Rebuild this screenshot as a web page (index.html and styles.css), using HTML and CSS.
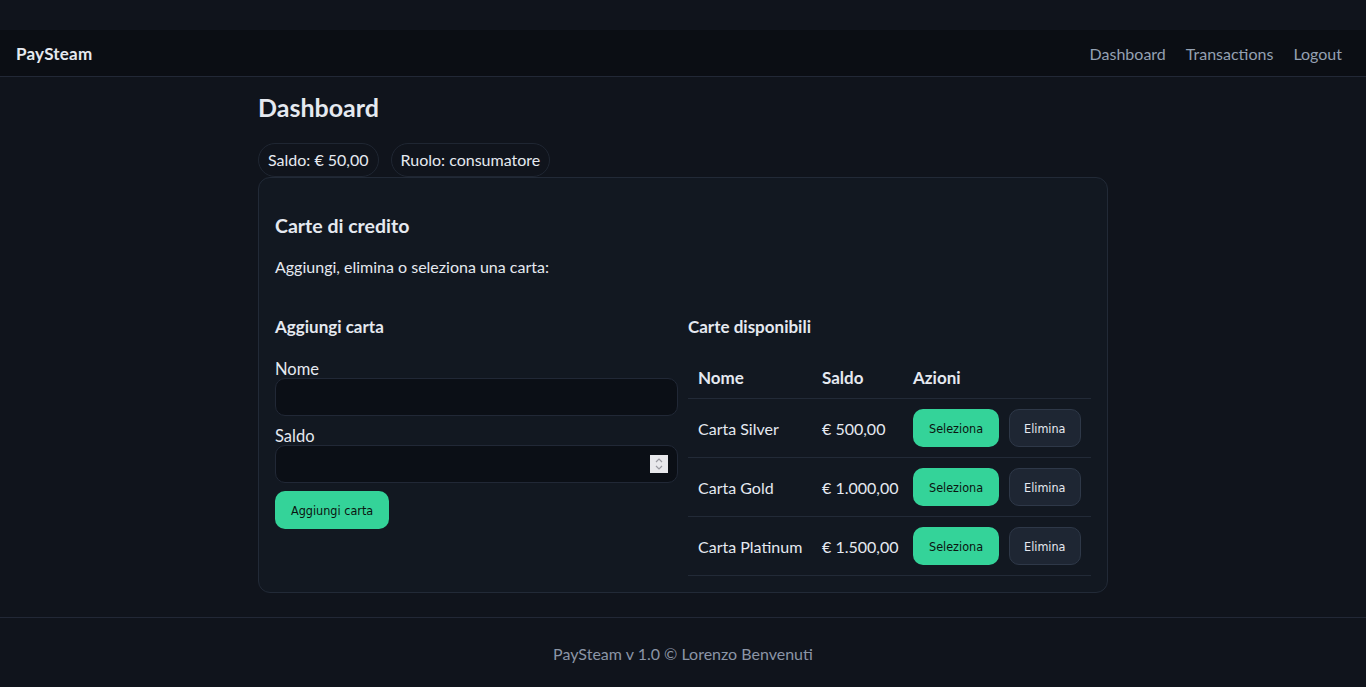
FILE: index.html
```html
<!DOCTYPE html>
<html lang="it">
<head>
    <meta charset="UTF-8">
    <meta name="viewport" content="width=device-width, initial-scale=1.0">
    <title>PaySteam - Dashboard</title>
    <link rel="stylesheet" href="styles.css">
</head>
<body>

    <!-- Top navigation -->
    <header class="topbar">
        <a class="brand" href="#">PaySteam</a>
        <nav class="nav-links">
            <a href="#">Dashboard</a>
            <a href="#">Transactions</a>
            <a href="#">Logout</a>
        </nav>
    </header>

    <main class="container">
        <h1>Dashboard</h1>

        <div class="badges">
            <span class="badge">Saldo: € 50,00</span>
            <span class="badge">Ruolo: consumatore</span>
        </div>

        <section class="card">
            <h2>Carte di credito</h2>
            <p>Aggiungi, elimina o seleziona una carta:</p>

            <div class="columns">
                <!-- Form to add a new card -->
                <div class="col">
                    <h3>Aggiungi carta</h3>
                    <form id="cardForm" class="card-form">
                        <label for="nome">Nome</label>
                        <input type="text" id="nome" name="nome">
                        <label for="saldo">Saldo</label>
                        <div class="number-field">
                            <input type="number" id="saldo" name="saldo" step="0.01">
                            <span class="spinner">
                                <svg width="10" height="14" viewBox="0 0 10 14">
                                    <path d="M2 5 L5 2 L8 5 M2 9 L5 12 L8 9" fill="none" stroke="#9a9aa2" stroke-width="1.2"/>
                                </svg>
                            </span>
                        </div>
                        <button type="submit" class="btn btn-primary btn-add">Aggiungi carta</button>
                    </form>
                </div>

                <!-- Cards already registered -->
                <div class="col">
                    <h3>Carte disponibili</h3>
                    <table class="cards-table">
                        <colgroup>
                            <col class="col-name">
                            <col class="col-saldo">
                            <col>
                        </colgroup>
                        <thead>
                            <tr>
                                <th>Nome</th>
                                <th>Saldo</th>
                                <th>Azioni</th>
                            </tr>
                        </thead>
                        <tbody>
                            <tr>
                                <td>Carta Silver</td>
                                <td>€ 500,00</td>
                                <td>
                                    <div class="actions">
                                        <button class="btn btn-primary">Seleziona</button>
                                        <button class="btn btn-secondary">Elimina</button>
                                    </div>
                                </td>
                            </tr>
                            <tr>
                                <td>Carta Gold</td>
                                <td>€ 1.000,00</td>
                                <td>
                                    <div class="actions">
                                        <button class="btn btn-primary">Seleziona</button>
                                        <button class="btn btn-secondary">Elimina</button>
                                    </div>
                                </td>
                            </tr>
                            <tr>
                                <td>Carta Platinum</td>
                                <td>€ 1.500,00</td>
                                <td>
                                    <div class="actions">
                                        <button class="btn btn-primary">Seleziona</button>
                                        <button class="btn btn-secondary">Elimina</button>
                                    </div>
                                </td>
                            </tr>
                        </tbody>
                    </table>
                </div>
            </div>
        </section>
    </main>

    <footer class="footer">
        PaySteam v 1.0 © Lorenzo Benvenuti
    </footer>

</body>
</html>
```

FILE: styles.css
```css
body {
    margin: 0;
    background-color: #10141c;
    color: #e5e9f0;
    font-family: Lato, "Noto Sans", sans-serif;
    font-size: 16px;
}
a {
    text-decoration: none;
}
.topbar {
    margin-top: 30px;
    height: 46px;
    display: flex;
    align-items: center;
    justify-content: space-between;
    padding: 0 16px;
    background-color: #0b0e14;
    border-bottom: 1px solid #222836;
}
.brand {
    color: #e5e9f0;
    font-weight: 700;
    font-size: 17px;
    letter-spacing: 0.2px;
}
.nav-links {
    display: flex;
    gap: 20px;
    padding-right: 8px;
}
.nav-links a {
    color: #94a0b2;
    font-size: 16px;
}
.container {
    width: 850px;
    margin: 0 auto;
    padding-bottom: 24px;
}
h1 {
    font-size: 25px;
    margin: 15px 0 21px;
    color: #e5e9f0;
}
.badges {
    display: flex;
    gap: 12px;
}
.badge {
    display: inline-block;
    padding: 8px 9px;
    border: 1px solid #1f2632;
    border-radius: 17px;
    font-size: 16px;
    line-height: 16px;
}
.card {
    background-color: #121821;
    border: 1px solid #222a37;
    border-radius: 12px;
    padding: 16px;
}
.card h2 {
    font-size: 19.5px;
    margin: 20px 0 20px;
}
.card p {
    font-size: 16px;
    margin: 0 0 40px;
}
.columns {
    display: grid;
    grid-template-columns: minmax(0, 1fr) minmax(0, 1fr);
    gap: 10px;
}
h3 {
    font-size: 17px;
    margin: 0 0 23px;
}
.card-form {
    display: flex;
    flex-direction: column;
    align-items: flex-start;
}
.card-form label {
    font-size: 16.5px;
    line-height: 18px;
}
.card-form input {
    box-sizing: border-box;
    width: 100%;
    height: 38px;
    margin-bottom: 11px;
    padding: 0 12px;
    background-color: #0b0f16;
    border: 1px solid #212836;
    border-radius: 10px;
    color: #e5e9f0;
    font-size: 15px;
}
.number-field {
    position: relative;
    width: 100%;
}
.number-field input::-webkit-inner-spin-button {
    -webkit-appearance: none;
}
.spinner {
    position: absolute;
    right: 10px;
    top: 10px;
    width: 18px;
    height: 18px;
    background-color: #e8e8ec;
    display: flex;
    align-items: center;
    justify-content: center;
}
.btn {
    height: 38px;
    border-radius: 10px;
    font-family: "DejaVu Sans Condensed", "DejaVu Sans", sans-serif;
    font-size: 12.5px;
    cursor: pointer;
}
.btn-primary {
    background-color: #34d399;
    border: none;
    color: #0b1410;
    padding: 0 16px;
}
.btn-secondary {
    background-color: #1e2633;
    border: 1px solid #2e3848;
    color: #e5e9f0;
    padding: 0 14px;
}
.btn-add {
    margin-top: -3px;
}
.cards-table {
    width: 100%;
    border-collapse: collapse;
    table-layout: fixed;
}
.col-name {
    width: 124px;
}
.col-saldo {
    width: 91px;
}
.cards-table th,
.cards-table td {
    text-align: left;
    padding: 0 10px;
    border-bottom: 1px solid #222a37;
    white-space: nowrap;
}
.cards-table th {
    height: 34px;
    padding-bottom: 4px;
    font-size: 17px;
}
.cards-table td {
    height: 58px;
    font-size: 16px;
}
.actions {
    display: flex;
    gap: 10px;
}
.footer {
    border-top: 1px solid #222836;
    text-align: center;
    color: #8b95a6;
    font-size: 16px;
    padding: 26px 0 40px;
}
```
